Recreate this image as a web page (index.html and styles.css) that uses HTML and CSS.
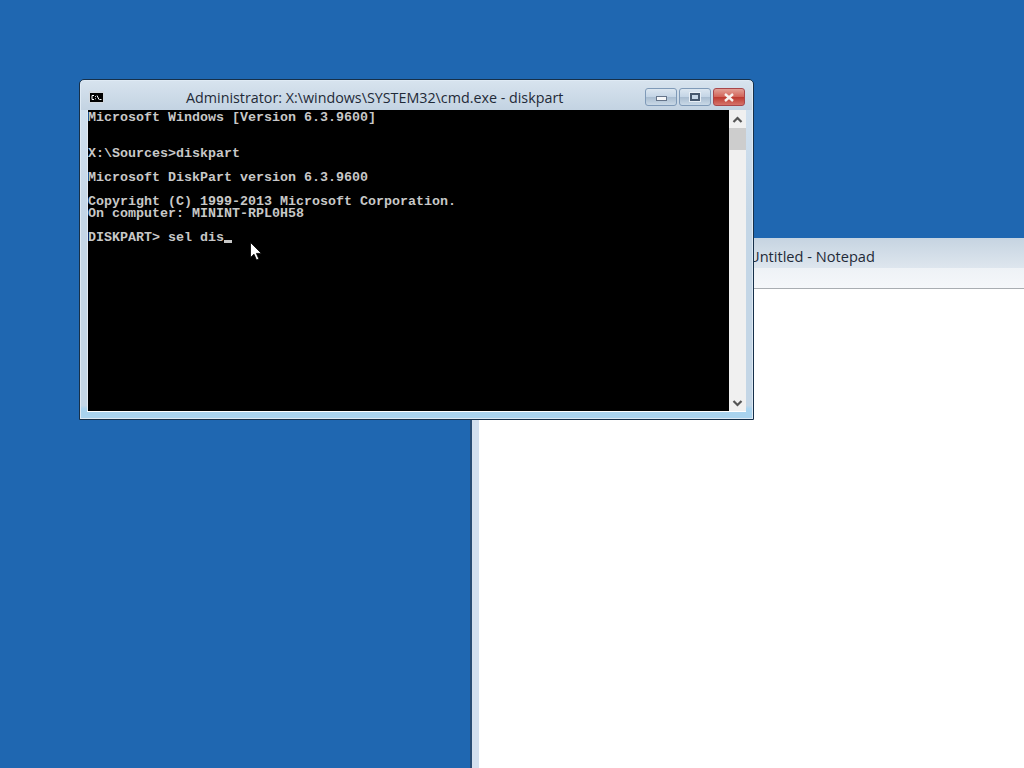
FILE: index.html
```html
<!DOCTYPE html>
<html lang="en">
<head>
<meta charset="utf-8">
<title>Administrator: X:\windows\SYSTEM32\cmd.exe - diskpart</title>
<link rel="stylesheet" href="styles.css">
</head>
<body>
<main class="desktop">
  <section class="window notepad">
    <header class="np-title"><span class="np-text">Untitled - Notepad</span></header>
    <div class="np-menu"></div>
    <div class="np-body"></div>
  </section>
  <section class="window cmd">
    <header class="cmd-title">
      <svg class="cmd-icon" width="15" height="12" viewBox="0 0 15 12"><rect width="15" height="12" fill="#d3d9df"/><rect x="1" y="2" width="13" height="9" fill="#000"/><path d="M5 4.5H3v4h2M6.5 5v.8M6.5 7.4v.8M8 4.5l2 4M10.5 8.5h2" stroke="#fff" fill="none"/></svg>
      <span class="cmd-text">Administrator: X:\windows\SYSTEM32\cmd.exe - diskpart</span>
      <div class="controls">
        <div class="ctl"><span class="glyph-min"></span></div>
        <div class="ctl"><span class="glyph-max"></span></div>
        <div class="ctl ctl-close"><svg width="12" height="9" viewBox="0 0 12 9"><path d="M2 1l8 7M10 1L2 8" stroke="#f6f1ee" stroke-width="2.4"/></svg></div>
      </div>
    </header>
    <div class="cmd-client">
      <pre class="console">Microsoft Windows [Version 6.3.9600]


X:\Sources&gt;diskpart

Microsoft DiskPart version 6.3.9600

Copyright (C) 1999-2013 Microsoft Corporation.
On computer: MININT-RPL0H58

DISKPART&gt; sel dis<span class="caret"></span></pre>
      <div class="scrollbar">
        <svg class="arrow" width="17" height="17" viewBox="0 0 17 17"><path d="M4.5 12l4-4 4 4" stroke="#555" stroke-width="2.2" fill="none"/></svg>
        <div class="track"><div class="thumb"></div></div>
        <svg class="arrow" width="17" height="17" viewBox="0 0 17 17"><path d="M4.5 7l4 4 4-4" stroke="#555" stroke-width="2.2" fill="none"/></svg>
      </div>
    </div>
  </section>
  <svg class="pointer" width="12" height="19" viewBox="0 0 12 19"><path d="M.5.5v15l3.5-3.3 2.5 5.8 2.4-1-2.5-5.6h5z" fill="#fff" stroke="#000" stroke-width=".8"/></svg>
</main>
</body>
</html>
```
FILE: styles.css
```css
* { box-sizing: border-box; }
html, body { margin: 0; height: 100%; overflow: hidden; }
.desktop { position: relative; width: 1024px; height: 768px; background: #1f67b1; overflow: hidden; }
.window { position: absolute; }

.notepad { left: 470px; top: 238px; width: 554px; height: 530px; display: flex; flex-direction: column; background: #d5e0ee; padding-left: 7px; border-left: 2px solid #2a4d75; }
.np-title { height: 30px; margin-left: -7px; padding: 8px 0 0 277px; background: linear-gradient(#c6d4e1, #dee6ee); }
.np-text { font: 14.6px/20px "Open Sans", "Noto Sans", sans-serif; color: #1f2a38; white-space: nowrap; }
.np-menu { height: 21px; margin-left: -7px; background: linear-gradient(#eef2f6, #f5f7fa); border-bottom: 1px solid #a9adb2; }
.np-body { flex: 1; background: #fff; }

.cmd { left: 79px; top: 79px; width: 675px; height: 341px; display: flex; flex-direction: column; border: 1px solid #16304a; border-radius: 5px 5px 0 0; background: linear-gradient(#d4e3f1, #c4d6e6 40%, #c4d6e6 96%, #a9d3ee 97%); padding: 0 7px 8px; box-shadow: inset 0 0 0 1px #dfeaf4; }
.cmd-title { height: 29px; flex: none; display: flex; position: relative; background: linear-gradient(#d7e3ee, #c3d3e2); margin: 1px -6px 0; padding: 0 6px 0 3px; border-radius: 4px 4px 0 0; }
.cmd-icon { flex: none; align-self: flex-start; margin: 10px 0 0 5px; }
.cmd-text { position: absolute; left: 105px; top: 7px; font: 14.3px/20px "Open Sans", "Noto Sans", sans-serif; color: #1f2a38; white-space: nowrap; }
.controls { margin-left: auto; display: flex; gap: 2px; align-self: flex-start; margin-top: 7px; margin-right: 1px; }
.ctl { width: 32px; height: 18px; display: flex; align-items: center; justify-content: center; border: 1px solid #7f9ab8; border-radius: 3px; background: linear-gradient(#dbe6f0 0, #c4d5e6 48%, #a9bdd1 52%, #c9d8e6); }
.ctl-close { border-color: #a8464b; background: linear-gradient(#e2a096 0, #d2655a 48%, #bd3a30 52%, #d5736a); }
.glyph-min { width: 11px; height: 5px; margin-top: 2px; background: #f4f6f8; border: 1px solid #66758a; }
.glyph-max { width: 10px; height: 8px; background: #c4d5e6; border: 2px solid #44566c; box-shadow: 0 0 0 1px #e8eff6; }

.cmd-client { flex: 1; min-height: 0; display: flex; background: #000; border-left: 1px solid #e4ebf2; box-shadow: 0 1px 0 #fff; }
.console { flex: 1; margin: 0; padding: 2px 0 0; font: bold 13.33px/12px "Liberation Mono", monospace; color: #c8c8c8; }
.caret { display: inline-block; width: 8px; height: 3px; background: #c8c8c8; vertical-align: -2px; }
.scrollbar { width: 17px; flex: none; display: flex; flex-direction: column; background: #f0f0f0; }
.arrow { flex: none; display: block; }
.track { flex: 1; }
.thumb { width: 100%; height: 22px; margin-top: 1px; background: #cdcdcd; }

.pointer { position: absolute; left: 250px; top: 242px; }
```
